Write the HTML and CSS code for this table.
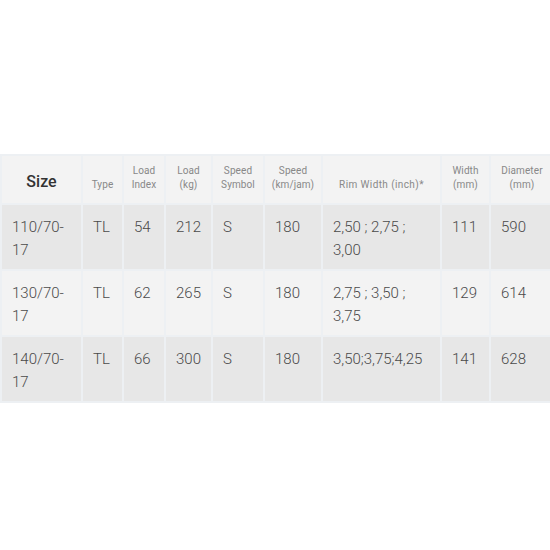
FILE: index.html
```html
<!DOCTYPE html>
<html>
<head>
<meta charset="utf-8">
<link rel="stylesheet" href="styles.css">
</head>
<body>
<div class="wrap">
<table class="spec">
  <thead>
    <tr>
      <th class="size w-size">Size</th>
      <th class="w-type">Type</th>
      <th class="w-li">Load<br>Index</th>
      <th class="w-kg">Load<br>(kg)</th>
      <th class="w-ss">Speed<br>Symbol</th>
      <th class="w-spd">Speed<br>(km/jam)</th>
      <th class="w-rim rim">Rim Width (inch)*</th>
      <th class="w-wd">Width<br>(mm)</th>
      <th class="w-dia">Diameter<br>(mm)</th>
    </tr>
  </thead>
  <tbody>
    <tr class="odd">
      <td>110/70-17</td><td>TL</td><td>54</td><td>212</td><td>S</td><td>180</td><td>2,50 ; 2,75 ; 3,00</td><td>111</td><td>590</td>
    </tr>
    <tr class="even">
      <td>130/70-17</td><td>TL</td><td>62</td><td>265</td><td>S</td><td>180</td><td>2,75 ; 3,50 ; 3,75</td><td>129</td><td>614</td>
    </tr>
    <tr class="odd">
      <td>140/70-17</td><td>TL</td><td>66</td><td>300</td><td>S</td><td>180</td><td>3,50;3,75;4,25</td><td>141</td><td>628</td>
    </tr>
  </tbody>
</table>
</div>
</body>
</html>
```
FILE: styles.css
```css
html, body {
  margin: 0;
  padding: 0;
  background: #ffffff;
  overflow: hidden;
}
.wrap {
  width: 550px;
  overflow: hidden;
  padding-top: 154px;
}
.spec {
  border-collapse: separate;
  border-spacing: 2px;
  background: #edf0f3;
  table-layout: fixed;
  width: 555px;
  font-family: Roboto, "Liberation Sans", sans-serif;
}
.spec th, .spec td { box-sizing: border-box; }
.w-size { width: 79px; }
.w-type { width: 39px; }
.w-li { width: 40px; }
.w-kg { width: 45px; }
.w-ss { width: 50px; }
.w-spd { width: 56px; }
.w-rim { width: 117px; }
.w-wd { width: 47px; }
.w-dia { width: 62px; }

.spec th {
  background: #f3f3f3;
  color: #888888;
  font-weight: 400;
  font-size: 10px;
  line-height: 14px;
  height: 47px;
  padding: 8px 0 11px;
  text-align: center;
  vertical-align: bottom;
  letter-spacing: 0.1px;
}
.spec th.rim { letter-spacing: 0.4px; }
.spec th.size {
  color: #333333;
  font-size: 16px;
  font-weight: 500;
  line-height: 20px;
  letter-spacing: 0;
}
.spec td {
  height: 64px;
  padding: 11px 9px 7px 10px;
  font-size: 15px;
  font-weight: 300;
  line-height: 23px;
  color: #4a4a4a;
  vertical-align: top;
  text-align: left;
}
.odd td { background: #e7e7e7; }
.even td { background: #f3f3f3; }
```
